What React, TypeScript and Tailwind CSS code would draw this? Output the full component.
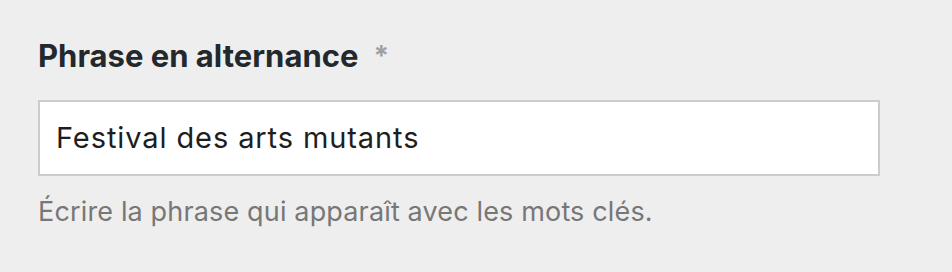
import React from "react";

export default function App() {
  return (
    <div
      className="w-[952px] h-[272px] bg-[#eeeeee] pl-[38px] pt-[36px] flex flex-col"
      style={{ fontFamily: "Inter, 'Noto Sans', sans-serif" }}
    >
      <div className="flex items-center h-[40px]">
        <span className="text-[31px] leading-[40px] font-bold text-[#23282d]">Phrase en alternance</span>
        <span className="ml-[15px] text-[28px] leading-[40px] font-bold text-[#a0a0a0]">*</span>
      </div>
      <div className="mt-[24px] w-[842px] h-[76px] border-2 border-[#cccccc] bg-white flex items-center pl-[16px]">
        <span className="text-[29px] leading-[34px] tracking-[0.9px] text-[#1e1e1e]">Festival des arts mutants</span>
      </div>
      <div className="mt-[20px] text-[27px] leading-[32px] tracking-[0.15px] text-[#777777]">
        Écrire la phrase qui apparaît avec les mots clés.
      </div>
    </div>
  );
}
